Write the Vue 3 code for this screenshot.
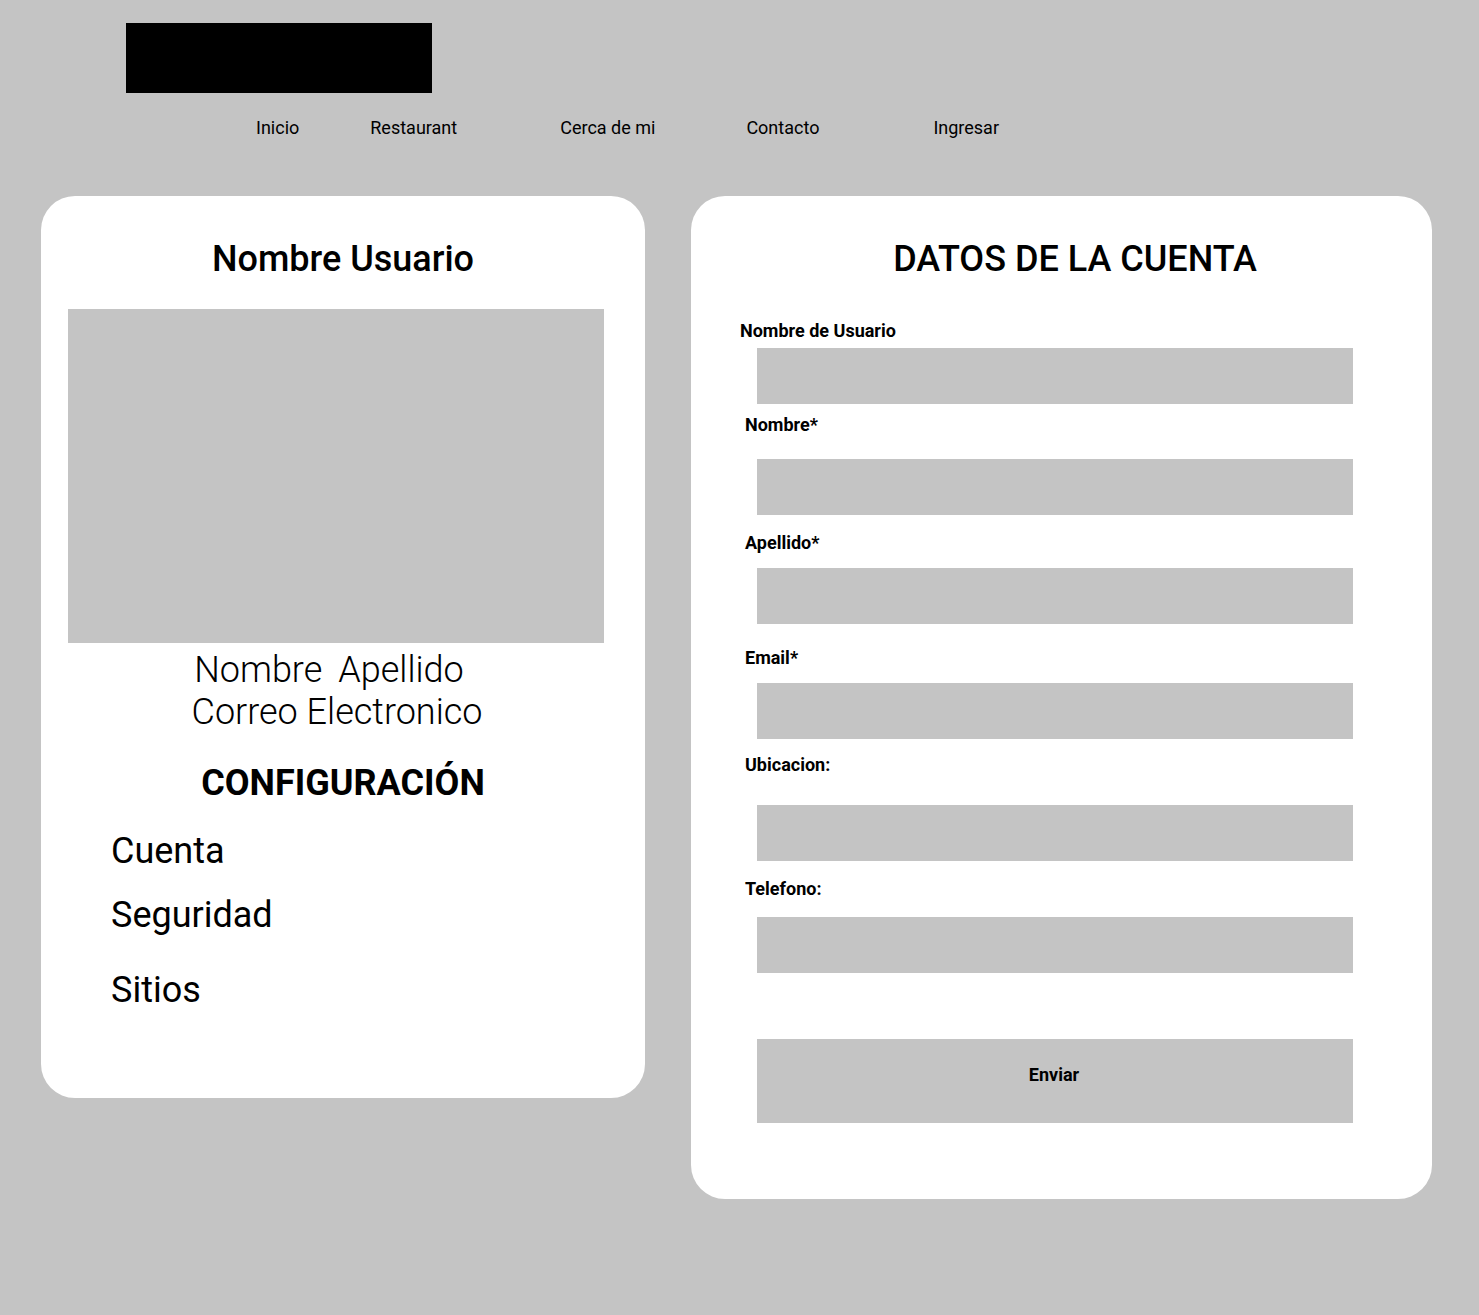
<script setup>
import { reactive } from 'vue'

const links = [
  { text: 'Inicio', name: 'home' },
  { text: 'Restaurant', name: 'restaurant' },
  { text: 'Cerca de mi', name: 'nearby' },
  { text: 'Contacto', name: 'contact' },
  { text: 'Ingresar', name: 'login' },
]

const settings = [
  { text: 'Cuenta', name: 'account' },
  { text: 'Seguridad', name: 'security' },
  { text: 'Sitios', name: 'sites' },
]

const fields = [
  { id: 'username', label: 'Nombre de Usuario', type: 'text' },
  { id: 'firstname', label: 'Nombre*', type: 'text' },
  { id: 'lastname', label: 'Apellido*', type: 'text' },
  { id: 'email', label: 'Email*', type: 'email' },
  { id: 'location', label: 'Ubicacion:', type: 'text' },
  { id: 'phone', label: 'Telefono:', type: 'tel' },
]

const form = reactive({})
</script>

<template>
  <div class="page">
    <header>
      <div class="logo"></div>
      <nav>
        <a v-for="link in links" :key="link.name" :class="link.name" href="#">{{ link.text }}</a>
      </nav>
    </header>

    <main>
      <aside class="card profile">
        <h1>Nombre Usuario</h1>
        <div class="photo"></div>
        <div class="identity">
          <p class="fullname"><span>Nombre</span><span>Apellido</span></p>
          <p>Correo Electronico</p>
        </div>
        <h2>CONFIGURACIÓN</h2>
        <ul>
          <li v-for="item in settings" :key="item.name" :class="item.name">
            <a href="#">{{ item.text }}</a>
          </li>
        </ul>
      </aside>

      <section class="card details">
        <h1>DATOS DE LA CUENTA</h1>
        <form @submit.prevent>
          <div v-for="field in fields" :key="field.id" class="field" :class="field.id">
            <label :for="field.id">{{ field.label }}</label>
            <input :id="field.id" v-model="form[field.id]" :type="field.type" />
          </div>
          <button type="submit">Enviar</button>
        </form>
      </section>
    </main>
  </div>
</template>

<style>
body {
  margin: 0;
  background: #c4c4c4;
}
</style>

<style scoped>
.page {
  box-sizing: border-box;
  min-height: 100vh;
  padding: 23px 47px 116px 41px;
  background: #c4c4c4;
  color: #000;
  font-family: Roboto, sans-serif;
  font-size: 18px;
  line-height: 21px;
}

.logo {
  width: 306px;
  height: 70px;
  margin-left: 85px;
  background: #000;
}

nav {
  display: flex;
  margin: 24px 0 58px 215px;
}

a {
  color: inherit;
  text-decoration: none;
  white-space: nowrap;
}

.restaurant {
  margin-left: 71px;
}

.nearby {
  margin-left: 103px;
}

.contact {
  margin-left: 91px;
}

.login {
  margin-left: 114px;
}

main {
  display: grid;
  grid-template-columns: 604fr 741fr;
  column-gap: 46px;
  align-items: start;
}

.card {
  box-sizing: border-box;
  min-width: 0;
  border-radius: 34px;
  background: #fff;
}

h1,
h2,
p,
ul {
  margin: 0;
}

h1,
h2,
.identity,
ul {
  font-size: 36px;
  line-height: 42px;
}

h1,
h2,
.identity {
  text-align: center;
}

h1 {
  font-weight: 500;
}

.profile {
  padding: 42px 27px 87px;
}

.profile h1 {
  margin-bottom: 29px;
}

.profile h2 {
  margin: 29px 0 26px;
}

.photo {
  height: 334px;
  margin: 0 14px 6px 0;
  background: #c4c4c4;
}

.identity {
  padding-right: 12px;
  font-weight: 300;
}

.fullname {
  display: flex;
  justify-content: center;
  gap: 16px;
  padding-right: 16px;
}

ul {
  padding: 0 0 0 43px;
  list-style: none;
}

.security {
  margin-top: 22px;
}

.sites {
  margin-top: 33px;
}

.details {
  padding: 42px 22px 76px 49px;
}

.details h1 {
  margin-bottom: 40px;
}

form {
  margin-right: 57px;
}

.field {
  display: flex;
  flex-direction: column;
  align-items: flex-start;
  gap: 15px;
}

label,
button {
  font-weight: 700;
}

label {
  margin-left: 5px;
}

input,
button {
  box-sizing: border-box;
  width: calc(100% - 17px);
  border: 0;
  border-radius: 0;
  background: #c4c4c4;
  color: #000;
  font-family: inherit;
  font-size: 18px;
}

input {
  height: 56px;
  margin: 0 0 0 17px;
  padding: 0 16px;
}

.username {
  gap: 7px;
}

.username label {
  margin-left: 0;
}

.firstname {
  gap: 24px;
  margin-top: 10px;
}

.lastname {
  margin-top: 17px;
}

.email {
  margin-top: 23px;
}

.location {
  gap: 30px;
  margin-top: 15px;
}

.phone {
  gap: 18px;
  margin-top: 17px;
}

button {
  display: block;
  height: 84px;
  margin: 66px 0 0 17px;
  padding: 0 2px 14px 0;
}
</style>
